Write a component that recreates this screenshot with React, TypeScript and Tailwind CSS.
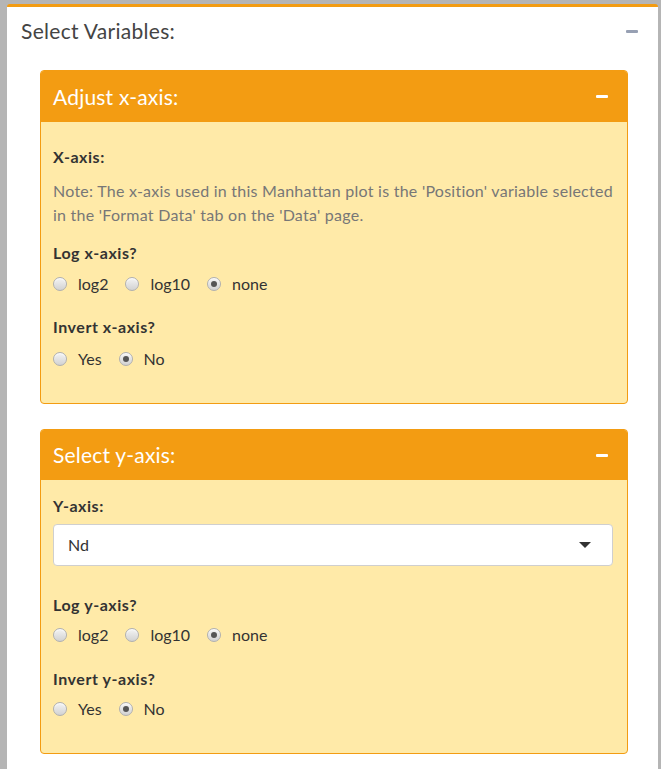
import React from "react";

const ORANGE = "bg-[#f39c12]";

function Radio({ label, checked }: { label: string; checked?: boolean }) {
  return (
    <div className="flex items-center mr-[17px]">
      <span className="relative w-[14px] h-[14px] rounded-full border border-[#b0b0b0] bg-[linear-gradient(#f4f4f4,#d2d2d2)] shadow-[inset_0_1px_1px_rgba(255,255,255,0.8)] flex items-center justify-center">
        {checked && <span className="w-[6px] h-[6px] rounded-full bg-[#555]" />}
      </span>
      <span className="ml-[11px] text-[16px] leading-[20px] text-[#333]">{label}</span>
    </div>
  );
}

function Minus({ white }: { white?: boolean }) {
  return (
    <span
      className={
        white
          ? "block w-[12px] h-[3px] rounded-[1px] bg-white"
          : "block w-[12px] h-[3px] rounded-[1px] bg-[#97a0b3]"
      }
    />
  );
}

function Label({ children }: { children: React.ReactNode }) {
  return (
    <div className="text-[16px] leading-[20px] font-bold tracking-[0.55px] text-[#333]">{children}</div>
  );
}

export default function App() {
  return (
    <div
      className="w-[661px] h-[769px] overflow-hidden bg-[#b5b5b5] pt-[4px] pl-[7px] pr-[3px]"
      style={{ fontFamily: "Lato, 'Open Sans', sans-serif" }}
    >
      <div className="bg-white border-t-[3px] border-[#f39c12] rounded-t-[3px] h-[780px]">
        <div className="h-[48px] flex items-center justify-between pl-[14px] pr-[20px]">
          <div className="text-[21px] leading-[24px] tracking-[0.3px] text-[#444]">Select Variables:</div>
          <Minus />
        </div>
        <div className="pt-[15px] pl-[33px] pr-[30px]">
          {/* Box 1 */}
          <div className="border border-[#f39c12] rounded-[4px] bg-[#ffeaa8] overflow-hidden">
            <div className={`${ORANGE} h-[51px] flex items-center justify-between pl-[12px] pr-[19px]`}>
              <div className="text-[21px] leading-[24px] tracking-[0.2px] text-white">Adjust x-axis:</div>
              <Minus white />
            </div>
            <div className="px-[12px] pt-[25px] pb-[34px]">
              <Label>X-axis:</Label>
              <div className="mt-[12px] text-[16px] leading-[24px] tracking-[0.25px] text-[#777] whitespace-nowrap">
                Note: The x-axis used in this Manhattan plot is the 'Position' variable selected
                <br />
                in the 'Format Data' tab on the 'Data' page.
              </div>
              <div className="mt-[16px]">
                <Label>Log x-axis?</Label>
              </div>
              <div className="mt-[11px] flex">
                <Radio label="log2" />
                <Radio label="log10" />
                <Radio label="none" checked />
              </div>
              <div className="mt-[23px]">
                <Label>Invert x-axis?</Label>
              </div>
              <div className="mt-[12px] flex">
                <Radio label="Yes" />
                <Radio label="No" checked />
              </div>
            </div>
          </div>

          {/* Box 2 */}
          <div className="mt-[25px] border border-[#f39c12] rounded-[4px] bg-[#ffeaa8] overflow-hidden">
            <div className={`${ORANGE} h-[50px] flex items-center justify-between pl-[12px] pr-[19px]`}>
              <div className="text-[21px] leading-[24px] tracking-[0.2px] text-white">Select y-axis:</div>
              <Minus white />
            </div>
            <div className="pl-[12px] pr-[14px] pt-[16px] pb-[34px]">
              <Label>Y-axis:</Label>
              <div className="mt-[8px] h-[42px] bg-white border border-[#cfcfcf] rounded-[4px] flex items-center justify-between pl-[14px] pr-[21px]">
                <span className="text-[16px] text-[#333]">Nd</span>
                <svg width="12" height="6" viewBox="0 0 12 6">
                  <path d="M0 0 L12 0 L6 6 Z" fill="#333" />
                </svg>
              </div>
              <div className="mt-[29px]">
                <Label>Log y-axis?</Label>
              </div>
              <div className="mt-[10px] flex">
                <Radio label="log2" />
                <Radio label="log10" />
                <Radio label="none" checked />
              </div>
              <div className="mt-[24px]">
                <Label>Invert y-axis?</Label>
              </div>
              <div className="mt-[10px] flex">
                <Radio label="Yes" />
                <Radio label="No" checked />
              </div>
            </div>
          </div>
        </div>
      </div>
    </div>
  );
}
